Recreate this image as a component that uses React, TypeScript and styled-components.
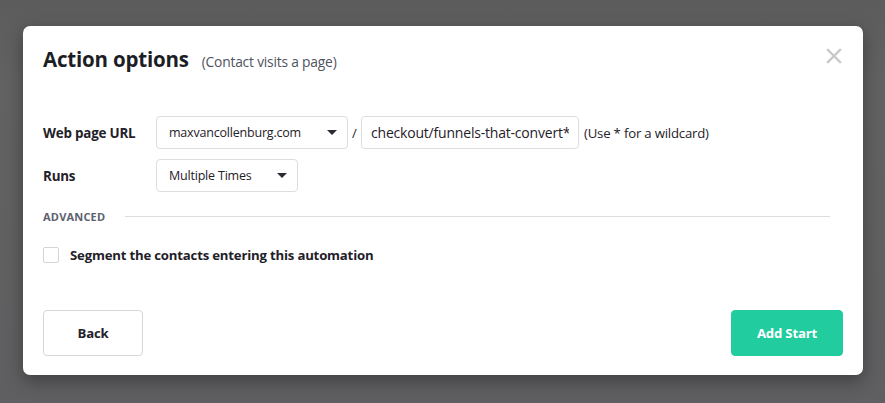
import React, { useState } from 'react';
import styled, { createGlobalStyle } from 'styled-components';

const GlobalStyle = createGlobalStyle`
  html, body {
    margin: 0;
    padding: 0;
    height: 100%;
  }
  body {
    background: linear-gradient(180deg, #5c5c5c 0%, #626262 20%, #5f5f61 100%);
    font-family: "Open Sans", "Noto Sans", sans-serif;
    color: #1f2129;
  }
`;

const Overlay = styled.div`
  width: 885px;
  height: 403px;
  box-sizing: border-box;
  padding: 26px 22px 0 23px;
`;

const Modal = styled.div`
  position: relative;
  width: 840px;
  height: 349px;
  box-sizing: border-box;
  background: #fff;
  border-radius: 7px;
  box-shadow: 0 6px 18px rgba(0, 0, 0, 0.35);
  padding: 19px 20px 19px 20px;
  display: flex;
  flex-direction: column;
`;

const Header = styled.div`
  display: flex;
  align-items: baseline;
  gap: 13px;
  height: 30px;
`;

const Title = styled.h2`
  margin: 0;
  font-size: 20.5px;
  font-weight: 700;
  color: #1c1e26;
  letter-spacing: -0.2px;
`;

const Subtitle = styled.span`
  font-size: 13.8px;
  color: #4f5360;
  letter-spacing: -0.2px;
`;

const Close = styled.button`
  position: absolute;
  top: 19px;
  right: 18px;
  width: 22px;
  height: 22px;
  padding: 0;
  border: none;
  background: none;
  cursor: pointer;
  display: flex;
  align-items: center;
  justify-content: center;
`;

const Body = styled.div`
  margin-top: 41px;
  display: flex;
  flex-direction: column;
  gap: 10px;
`;

const Row = styled.div`
  display: flex;
  align-items: center;
  height: 33px;
`;

const Label = styled.div`
  width: 113px;
  font-size: 13.4px;
  font-weight: 700;
  color: #1f2129;
  letter-spacing: -0.2px;
`;

const SelectBox = styled.div<{ $width: number }>`
  width: ${(p) => p.$width}px;
  height: 33px;
  box-sizing: border-box;
  border: 1px solid #dcdde1;
  border-radius: 4px;
  display: flex;
  align-items: center;
  justify-content: space-between;
  padding: 0 10px 0 12px;
  font-size: 12.5px;
  color: #1f2129;
  letter-spacing: -0.2px;
`;

const Caret = styled.span`
  width: 0;
  height: 0;
  border-left: 5px solid transparent;
  border-right: 5px solid transparent;
  border-top: 5px solid #2a2c33;
`;

const Slash = styled.span`
  width: 13px;
  text-align: center;
  font-size: 13px;
  color: #1f2129;
`;

const TextInput = styled.input`
  width: 218px;
  height: 33px;
  box-sizing: border-box;
  border: 1px solid #dcdde1;
  border-radius: 4px;
  padding: 0 9px;
  font-family: inherit;
  font-size: 14px;
  color: #1f2129;
  letter-spacing: -0.2px;
  outline: none;
`;

const Hint = styled.span`
  margin-left: 5px;
  font-size: 13.2px;
  color: #1f2129;
  letter-spacing: -0.2px;
`;

const Divider = styled.div`
  margin-top: 17px;
  display: flex;
  align-items: center;
  gap: 20px;
  padding-right: 13px;
`;

const DividerLabel = styled.span`
  font-size: 11px;
  font-weight: 700;
  letter-spacing: 0.2px;
  color: #5d6170;
`;

const DividerLine = styled.div`
  flex: 1;
  height: 1px;
  background: #dcdde1;
`;

const CheckRow = styled.label`
  margin-top: 22px;
  display: flex;
  align-items: center;
  gap: 11px;
  cursor: pointer;
`;

const Box = styled.span<{ $checked: boolean }>`
  width: 16px;
  height: 16px;
  box-sizing: border-box;
  border: 1px solid #d3d4d8;
  border-radius: 2px;
  background: ${(p) => (p.$checked ? '#20c997' : '#fff')};
`;

const CheckText = styled.span`
  font-size: 13.2px;
  font-weight: 700;
  color: #1f2129;
  letter-spacing: -0.2px;
`;

const Footer = styled.div`
  margin-top: auto;
  display: flex;
  justify-content: space-between;
`;

const Button = styled.button<{ $primary?: boolean }>`
  height: 46px;
  box-sizing: border-box;
  border-radius: 4px;
  font-family: inherit;
  font-size: 13.2px;
  font-weight: 700;
  letter-spacing: -0.2px;
  cursor: pointer;
  border: 1px solid ${(p) => (p.$primary ? '#21cc9e' : '#d6d7db')};
  background: ${(p) => (p.$primary ? '#21cc9e' : '#fff')};
  color: ${(p) => (p.$primary ? '#fff' : '#1f2129')};
  width: ${(p) => (p.$primary ? '112px' : '100px')};
`;

export default function App() {
  const [checked, setChecked] = useState(false);
  return (
    <>
      <GlobalStyle />
      <Overlay>
        <Modal>
          <Header>
            <Title>Action options</Title>
            <Subtitle>(Contact visits a page)</Subtitle>
          </Header>
          <Close aria-label="Close">
            <svg width="16" height="16" viewBox="0 0 16 16">
              <path d="M2 2 L14 14 M14 2 L2 14" stroke="#c8c9cc" strokeWidth="2.4" strokeLinecap="square" />
            </svg>
          </Close>
          <Body>
            <Row>
              <Label>Web page URL</Label>
              <SelectBox $width={192}>
                maxvancollenburg.com
                <Caret />
              </SelectBox>
              <Slash>/</Slash>
              <TextInput defaultValue="checkout/funnels-that-convert*" />
              <Hint>(Use * for a wildcard)</Hint>
            </Row>
            <Row>
              <Label>Runs</Label>
              <SelectBox $width={142}>
                Multiple Times
                <Caret />
              </SelectBox>
            </Row>
          </Body>
          <Divider>
            <DividerLabel>ADVANCED</DividerLabel>
            <DividerLine />
          </Divider>
          <CheckRow onClick={() => setChecked((c) => !c)}>
            <Box $checked={checked} />
            <CheckText>Segment the contacts entering this automation</CheckText>
          </CheckRow>
          <Footer>
            <Button>Back</Button>
            <Button $primary>Add Start</Button>
          </Footer>
        </Modal>
      </Overlay>
    </>
  );
}
